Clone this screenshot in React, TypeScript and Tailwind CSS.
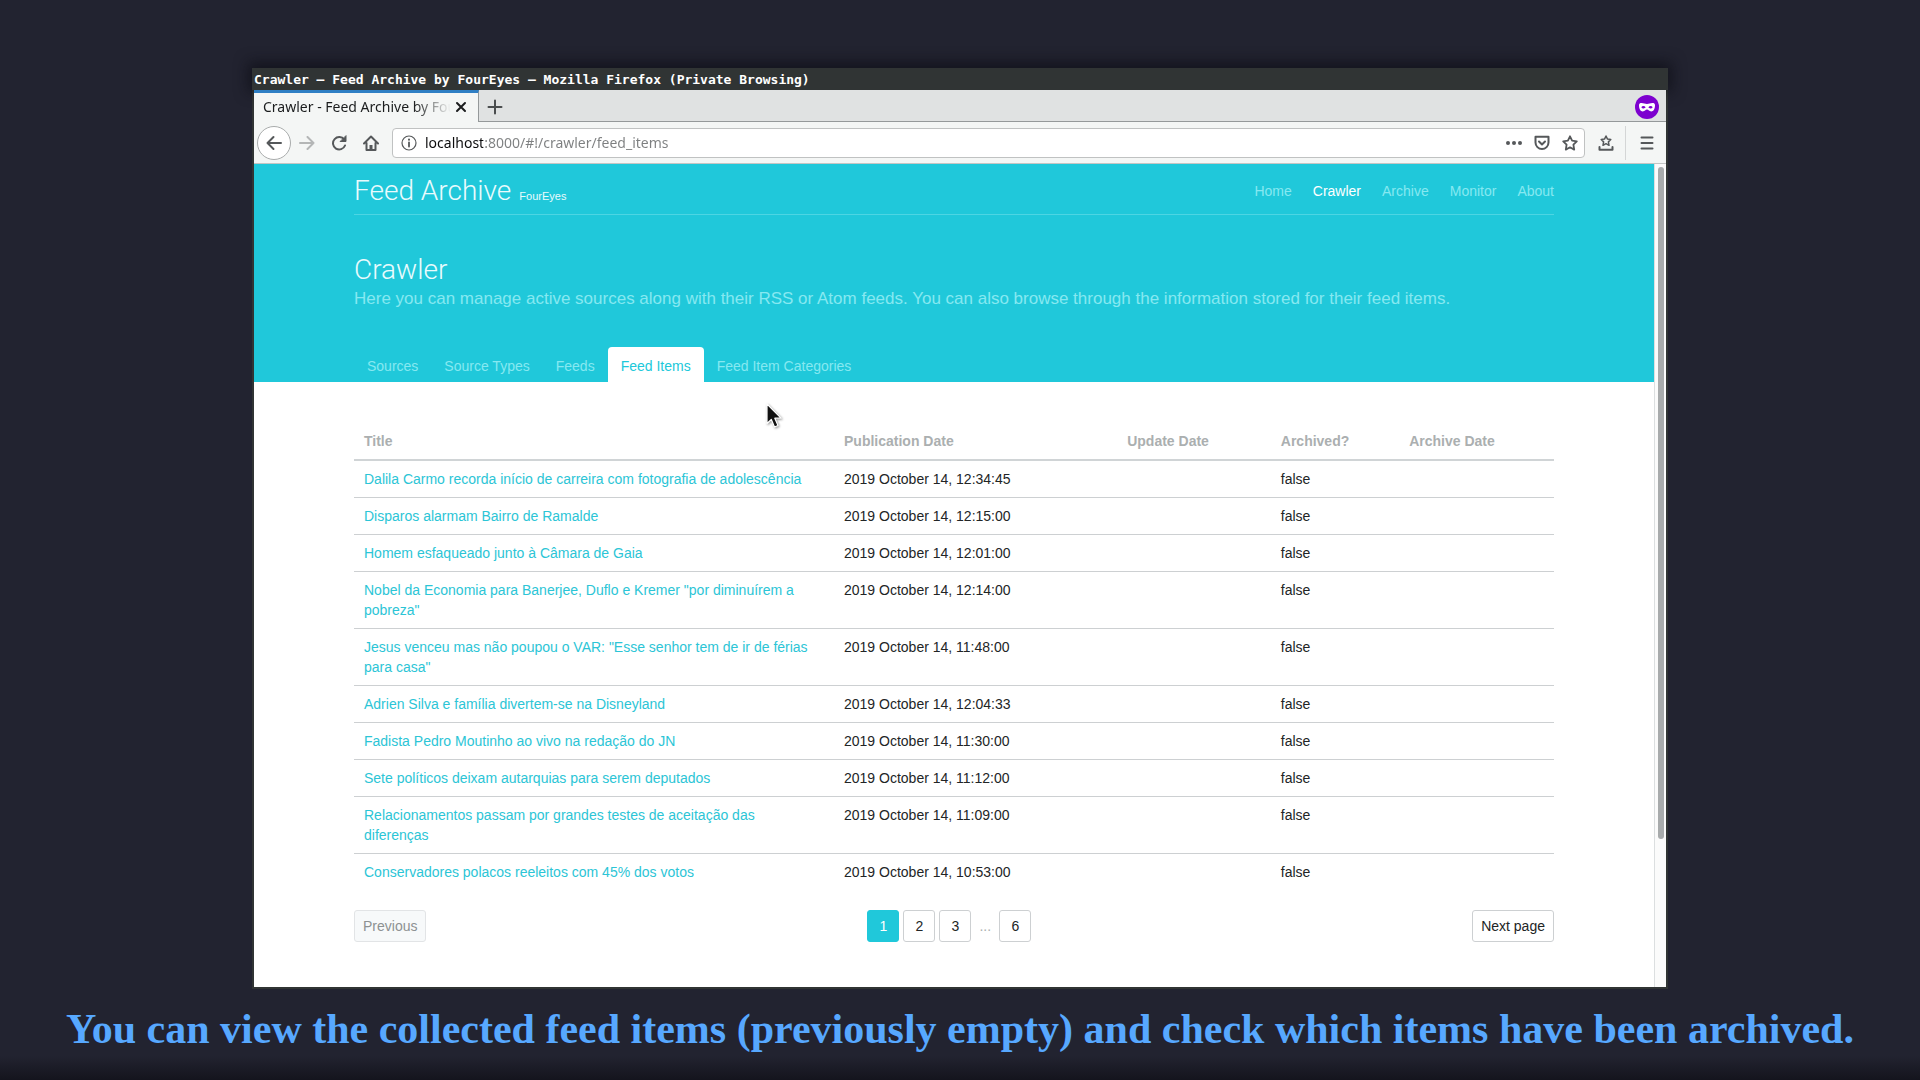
import React from "react";

const navItems = ["Home", "Crawler", "Archive", "Monitor", "About"];
const tabs = ["Sources", "Source Types", "Feeds", "Feed Items", "Feed Item Categories"];

const rows = [
  { title: "Dalila Carmo recorda início de carreira com fotografia de adolescência", date: "2019 October 14, 12:34:45" },
  { title: "Disparos alarmam Bairro de Ramalde", date: "2019 October 14, 12:15:00" },
  { title: "Homem esfaqueado junto à Câmara de Gaia", date: "2019 October 14, 12:01:00" },
  { title: 'Nobel da Economia para Banerjee, Duflo e Kremer "por diminuírem a pobreza"', date: "2019 October 14, 12:14:00" },
  { title: 'Jesus venceu mas não poupou o VAR: "Esse senhor tem de ir de férias para casa"', date: "2019 October 14, 11:48:00" },
  { title: "Adrien Silva e família divertem-se na Disneyland", date: "2019 October 14, 12:04:33" },
  { title: "Fadista Pedro Moutinho ao vivo na redação do JN", date: "2019 October 14, 11:30:00" },
  { title: "Sete políticos deixam autarquias para serem deputados", date: "2019 October 14, 11:12:00" },
  { title: "Relacionamentos passam por grandes testes de aceitação das diferenças", date: "2019 October 14, 11:09:00" },
  { title: "Conservadores polacos reeleitos com 45% dos votos", date: "2019 October 14, 10:53:00" },
];

function IconButton({ label, className = "", children }: { label: string; className?: string; children: React.ReactNode }) {
  return (
    <button type="button" aria-label={label} className={`shrink-0 text-[#55585a] ${className}`}>
      <svg
        viewBox="0 0 16 16"
        className="size-4"
        fill="none"
        stroke="currentColor"
        strokeWidth="2"
        strokeLinecap="round"
        strokeLinejoin="round"
      >
        {children}
      </svg>
    </button>
  );
}

function TitleBar() {
  return (
    <div className="h-[22px] bg-[#303434] pl-0.5 font-['DejaVu_Sans_Mono','Liberation_Mono',monospace] text-[13px] leading-6 font-bold whitespace-nowrap text-white shadow-[0_-2px_14px_4px_rgba(12,12,20,0.65)]">
      Crawler – Feed Archive by FourEyes – Mozilla Firefox (Private Browsing)
    </div>
  );
}

function TabStrip() {
  return (
    <div className="flex h-8 bg-[#e0e2e2]">
      <div className="flex w-[225px] items-center gap-1 border-t-3 border-r border-t-[#2f7fc4] border-r-[#95999a] bg-[#f4f6f5] pb-0.5 pl-[9px] text-[#1b1d1e]">
        <span className="w-[188px] overflow-hidden mask-r-from-80% mask-r-to-100% text-sm whitespace-nowrap">
          Crawler - Feed Archive by FourEyes
        </span>
        <button type="button" aria-label="Close tab" className="shrink-0">
          <svg viewBox="0 0 12 12" className="size-3" stroke="currentColor" strokeWidth="2" strokeLinecap="round">
            <path d="M2 2l8 8M10 2l-8 8" />
          </svg>
        </button>
      </div>
      <div className="flex flex-1 items-center justify-between border-b border-[#95999a] pt-0.5 pr-[7px] pl-2">
        <button type="button" aria-label="Open a new tab" className="text-[#4a4d4e]">
          <svg viewBox="0 0 16 16" className="size-4" stroke="currentColor" strokeWidth="2" strokeLinecap="round">
            <path d="M8 1.5v13M1.5 8h13" />
          </svg>
        </button>
        <svg viewBox="0 0 24 24" className="size-6" role="img" aria-label="Private browsing">
          <circle cx="12" cy="12" r="12" fill="#7d00cf" />
          <path
            fill="#fff"
            fillRule="evenodd"
            d="M4 10.2C4 8.6 5 8 6.6 8c2 0 3.600.9 5.400.9S15.400 8 17.400 8C19 8 20 8.600 20 10.200c0 3.600-1.400 6.200-3.800 6.200-1.900 0-2.700-1.900-4.200-1.900s-2.300 1.900-4.200 1.900C5.400 16.400 4 13.800 4 10.200zM6.300 12.200c.6.900 1.400 1.300 2.300 1.300s1.600-.5 2-1.200c-.5-.8-1.300-1.200-2.200-1.200s-1.600.4-2.100 1.100zm7.100.1c.4.700 1.100 1.200 2 1.200s1.700-.4 2.300-1.300c-.5-.7-1.200-1.100-2.100-1.100s-1.700.4-2.200 1.200z"
          />
        </svg>
      </div>
    </div>
  );
}

function Toolbar() {
  return (
    <div className="flex h-[42px] items-center border-b border-[#c3c5c4] bg-[#f4f6f5] pr-[11px] pl-[3px]">
      <IconButton label="Back" className="flex size-[34px] items-center justify-center rounded-full border border-[#a9acac] bg-white">
        <path d="M15 8H1.500M7.500 2L1.500 8l6 6" />
      </IconButton>
      <IconButton label="Forward" className="ml-2 opacity-40">
        <path d="M1 8h13.500M8.500 2l6 6-6 6" />
      </IconButton>
      <IconButton label="Reload" className="ml-4">
        <path d="M13.200 4.600A6.200 6.200 0 1 0 14 10.500" />
        <path d="M15 1v5.500H9.500z" fill="currentColor" strokeWidth="1" />
      </IconButton>
      <IconButton label="Home" className="ml-4">
        <path d="M1 8.500L8 1.500l7 7M3.500 8v7h9V8" />
        <path d="M8 14v-4" strokeWidth="3" strokeLinecap="butt" />
      </IconButton>
      <div className="ml-[13px] flex h-[30px] flex-1 items-center rounded border border-[#c0c2c2] bg-white pr-1.5 pl-2">
        <IconButton label="Site information">
          <circle cx="8" cy="8" r="7" strokeWidth="1.2" />
          <path d="M8 7.500V11.500" strokeWidth="1.800" />
          <path d="M8 4.600v.1" strokeWidth="2" />
        </IconButton>
        <input
          type="text"
          aria-label="Address"
          defaultValue="localhost:8000/#!/crawler/feed_items"
          className="ml-2 min-w-0 flex-1 bg-[linear-gradient(90deg,#0c0c0d_58px,#7d7f80_58px)] bg-clip-text text-sm text-transparent outline-none"
        />
        <IconButton label="Page actions">
          <g fill="currentColor" stroke="none">
            <circle cx="2" cy="8" r="2" />
            <circle cx="8" cy="8" r="2" />
            <circle cx="14" cy="8" r="2" />
          </g>
        </IconButton>
        <IconButton label="Save to Pocket" className="ml-3">
          <path d="M1.500 1.800h13V7.500a6.500 6.500 0 0 1-13 0z" />
          <path d="M5 6.500l3 3 3-3" />
        </IconButton>
        <IconButton label="Bookmark this page" className="ml-3">
          <path d="M8 1.300l2.100 4.400 4.700.6-3.400 3.400.8 4.900L8 12.300l-4.200 2.300.8-4.900L1.200 6.300l4.700-.6z" strokeWidth="1.800" />
        </IconButton>
      </div>
      <IconButton label="View bookmarks" className="ml-[13px]">
        <path d="M8 1l1.500 3.100 3.300.4-2.400 2.400.6 3.400-3-1.600-3 1.600.6-3.400-2.400-2.400 3.300-.4z" strokeWidth="1.500" />
        <path d="M1.500 12v2.800h13V12" />
      </IconButton>
      <div className="ml-[11px] h-[34px] border-l border-[#d4d6d6]" />
      <IconButton label="Open menu" className="ml-[13px]">
        <path d="M2.500 2.500h11M2.500 8h11M2.500 13.500h11" />
      </IconButton>
    </div>
  );
}

function PageHeader() {
  return (
    <header className="bg-[#20c8da] text-[#86e8f1]">
      <div className="mx-auto max-w-[1200px]">
        <div className="flex items-center justify-between border-b border-[#4dd5e3] pt-[11px] pb-[7px]">
          <a href="#!/" className="flex items-baseline gap-2 text-[#e9fbfd]">
            <span className="font-['Roboto',sans-serif] text-[28px] leading-8 font-light">Feed Archive</span>
            <span className="text-[11px]">FourEyes</span>
          </a>
          <nav className="flex gap-[21px]">
            {navItems.map((item) => (
              <a key={item} href={`#!/${item.toLowerCase()}`} className={item === "Crawler" ? "text-white" : ""}>
                {item}
              </a>
            ))}
          </nav>
        </div>
        <h1 className="pt-[37px] font-['Roboto',sans-serif] text-[28px] leading-9 font-light text-[#e9fbfd]">Crawler</h1>
        <p className="text-[17px] leading-[22px]">
          Here you can manage active sources along with their RSS or Atom feeds. You can also browse through the information
          stored for their feed items.
        </p>
        <nav className="mt-[37px] flex">
          {tabs.map((tab) => (
            <a
              key={tab}
              href={`#!/crawler/${tab.toLowerCase().replaceAll(" ", "_")}`}
              className={`rounded-t-sm px-[13px] pt-[9px] pb-1.5 ${tab === "Feed Items" ? "bg-white text-[#20c8da]" : ""}`}
            >
              {tab}
            </a>
          ))}
        </nav>
      </div>
    </header>
  );
}

function FeedTable() {
  return (
    <table className="w-full table-fixed border-collapse text-left">
      <colgroup>
        <col className="w-[40%]" />
        <col className="w-[23.6%]" />
        <col className="w-[12.8%]" />
        <col className="w-[10.7%]" />
        <col />
      </colgroup>
      <thead>
        <tr className="border-b-2 border-[#d0d4d6] text-[#abafb0]">
          {["Title", "Publication Date", "Update Date", "Archived?", "Archive Date"].map((heading) => (
            <th key={heading} scope="col" className="px-2.5 py-2 font-bold">
              {heading}
            </th>
          ))}
        </tr>
      </thead>
      <tbody>
        {rows.map((row) => (
          <tr key={row.title} className="border-b border-[#cdd0d2] align-top last:border-b-0">
            <td className="py-2 pr-4 pl-2.5">
              <a href="#!/crawler/feed_items" className="text-[#2cc5d6]">
                {row.title}
              </a>
            </td>
            <td className="px-2.5 py-2">{row.date}</td>
            <td />
            <td className="px-2.5 py-2">false</td>
            <td />
          </tr>
        ))}
      </tbody>
    </table>
  );
}

function PageButton({ label, active = false }: { label: string; active?: boolean }) {
  return (
    <button
      type="button"
      aria-current={active ? "page" : undefined}
      className={`size-8 rounded-[3px] border ${active ? "border-[#20c8da] bg-[#20c8da] text-white" : "border-[#cdd0d2]"}`}
    >
      {label}
    </button>
  );
}

function Pagination() {
  return (
    <nav aria-label="Pagination" className="flex items-center justify-between pt-5 pb-[45px]">
      <button type="button" disabled className="h-8 rounded-[3px] border border-[#e2e4e6] bg-[#f7f9fa] px-2 text-[#8d9192]">
        Previous
      </button>
      <div className="flex items-center gap-1">
        <PageButton label="1" active />
        <PageButton label="2" />
        <PageButton label="3" />
        <span className="w-5 text-center text-[#abafb0]">...</span>
        <PageButton label="6" />
      </div>
      <button type="button" className="h-8 rounded-[3px] border border-[#cdd0d2] px-2">
        Next page
      </button>
    </nav>
  );
}

export default function App() {
  return (
    <div className="flex min-h-screen flex-col bg-[#222330] pt-[68px]">
      <main className="relative mx-[252px] bg-[#303434] font-['Noto_Sans',sans-serif]">
        <TitleBar />
        <div className="mx-0.5 mb-0.5">
          <TabStrip />
          <Toolbar />
          <div className="flex bg-white font-['Liberation_Sans',Arial,sans-serif] text-sm leading-5 text-[#222526]">
            <div className="min-w-0 flex-1">
              <PageHeader />
              <div className="mx-auto max-w-[1200px] pt-[41px]">
                <FeedTable />
                <Pagination />
              </div>
            </div>
            <div className="w-3 border-l border-[#dcdfe0] bg-[#fbfbfb] px-0.5 pt-[3px]">
              <div className="mx-auto h-[82%] w-1.5 rounded-full bg-[#a8abac]" />
            </div>
          </div>
        </div>
        <svg viewBox="0 0 16 26" className="absolute top-[335px] left-[514px] h-[26px] w-4 drop-shadow-[1px_1px_1px_rgba(0,0,0,0.4)]">
          <path
            d="M1 1v19.500l4.300-4 3.200 7.500 3.500-1.500-3.200-7.300H15z"
            fill="#111"
            stroke="#fff"
            strokeWidth="1.200"
            strokeLinejoin="round"
          />
        </svg>
      </main>
      <div className="flex flex-1 items-center justify-center bg-[linear-gradient(0deg,#14141d_0,#222330_24px)]">
        <p className="pb-3 text-center font-['Liberation_Serif',serif] text-[42px] leading-[48px] font-bold whitespace-nowrap text-[#57a8ff]">
          You can view the collected feed items (previously empty) and check which items have been archived.
        </p>
      </div>
    </div>
  );
}
